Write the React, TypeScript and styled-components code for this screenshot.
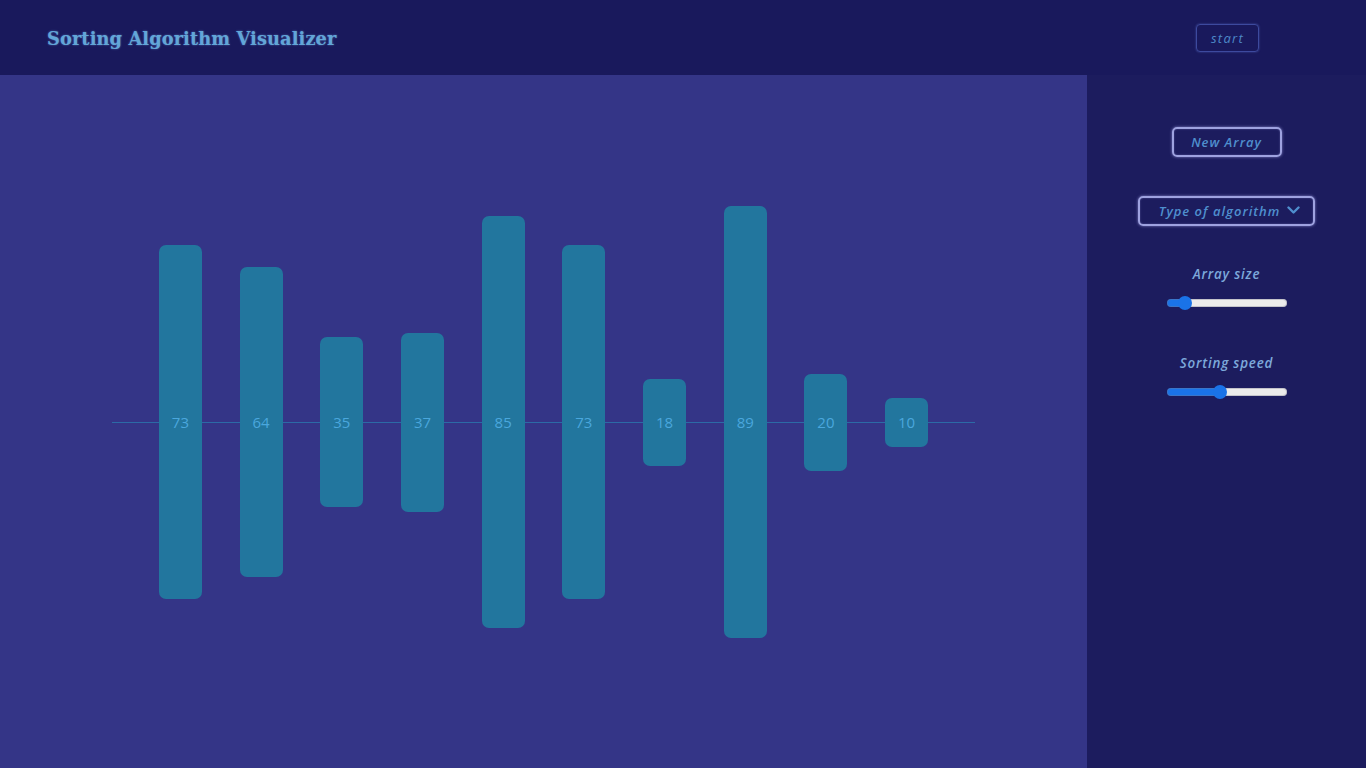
import React, { useState } from "react";
import styled, { createGlobalStyle } from "styled-components";

const Global = createGlobalStyle`
  html, body { margin: 0; padding: 0; }
  body { background: #343587; font-family: "Open Sans", sans-serif; overflow: hidden; }
  * { box-sizing: border-box; }
`;

const Page = styled.div`
  width: 1366px;
  height: 768px;
  display: flex;
  flex-direction: column;
`;

const Header = styled.header`
  height: 75px;
  flex: none;
  background: #19195c;
  display: flex;
  align-items: center;
  justify-content: space-between;
  padding: 0 107px 0 47px;
`;

const Title = styled.h1`
  margin: 0;
  padding-top: 2px;
  font-family: "DejaVu Serif", "Liberation Serif", serif;
  font-weight: bold;
  font-size: 17.8px;
  letter-spacing: 0.1px;
  color: #62a6d8;
  text-shadow: 0 0 2px rgba(120, 170, 230, 0.6);
`;

const StartButton = styled.button`
  width: 63px;
  height: 28px;
  margin-top: 1px;
  background: transparent;
  border: 1px solid #3d4a9e;
  border-radius: 4px;
  box-shadow: 0 0 2px rgba(90, 110, 200, 0.7);
  font-family: "Open Sans", sans-serif;
  font-style: italic;
  font-size: 13px;
  letter-spacing: 1.3px;
  color: #4d88c8;
  padding: 0;
`;

const Body = styled.div`
  flex: 1;
  display: flex;
`;

const Stage = styled.main`
  width: 1087px;
  background: #343587;
  display: flex;
  align-items: center;
  justify-content: center;
  padding-top: 1px;
`;

const BarRow = styled.div`
  display: flex;
  align-items: center;
  gap: 37.7px;
  padding: 0 47px;
  background: linear-gradient(#2c6aa6, #2c6aa6) center / 100% 1px no-repeat;
`;

const Bar = styled.div<{ $h: number }>`
  width: 43px;
  height: ${(p) => p.$h}px;
  background: #22769e;
  border-radius: 7px;
  display: flex;
  align-items: center;
  justify-content: center;
  font-family: "Open Sans", sans-serif;
  font-size: 15px;
  color: #4aa7dd;
`;

const Sidebar = styled.aside`
  flex: 1;
  background: #1c1c5e;
  display: flex;
  flex-direction: column;
  align-items: center;
  padding-top: 52px;
`;

const OutlineButton = styled.button<{ $w: number }>`
  width: ${(p) => p.$w}px;
  height: 30px;
  background: transparent;
  border: 2px solid #9ea2e0;
  border-radius: 5px;
  box-shadow: 0 0 3px rgba(170, 170, 240, 0.7), inset 0 0 2px rgba(170, 170, 240, 0.4);
  font-family: "Open Sans", sans-serif;
  font-style: italic;
  font-weight: 600;
  font-size: 13px;
  letter-spacing: 1px;
  color: #4f8fce;
  display: flex;
  align-items: center;
  justify-content: center;
  gap: 7px;
  padding: 0 0 1px;
`;

const SelectButton = styled(OutlineButton)`
  margin-top: 39px;
  padding-left: 6px;
`;

const Control = styled.div<{ $mt: number }>`
  margin-top: ${(p) => p.$mt}px;
  display: flex;
  flex-direction: column;
  align-items: center;
  gap: 13px;
`;

const Label = styled.label`
  font-family: "Open Sans", sans-serif;
  font-style: italic;
  font-weight: 600;
  font-size: 13.4px;
  line-height: 18px;
  letter-spacing: 0.8px;
  color: #7da9db;
`;

const Range = styled.input`
  -webkit-appearance: none;
  appearance: none;
  width: 120px;
  height: 14px;
  margin: 0;
  background: transparent;
  &::-webkit-slider-runnable-track {
    height: 8px;
    border-radius: 4px;
    background: var(--track);
    box-shadow: inset 0 0 0 1px rgba(120, 120, 140, 0.35);
  }
  &::-webkit-slider-thumb {
    -webkit-appearance: none;
    width: 14px;
    height: 14px;
    border-radius: 50%;
    background: #1a73e8;
    margin-top: -3px;
    border: none;
  }
`;

const Chevron = () => (
  <svg width="13" height="9" viewBox="0 0 13 9" fill="none">
    <path d="M1.5 1.5 L6.5 6.5 L11.5 1.5" stroke="#4f8fce" strokeWidth="2.4" strokeLinecap="round" strokeLinejoin="round" />
  </svg>
);

const Slider = ({ value }: { value: number }) => {
  const [v, setV] = useState(value);
  const pct = 5 + v * 0.9;
  return (
    <Range
      type="range"
      min={0}
      max={100}
      value={v}
      onChange={(e) => setV(Number(e.target.value))}
      style={{ ["--track" as any]: `linear-gradient(to right, #1a73e8 ${pct}%, #ebebeb ${pct}%)` }}
    />
  );
};

const values = [73, 64, 35, 37, 85, 73, 18, 89, 20, 10];

export default function App() {
  return (
    <Page>
      <Global />
      <Header>
        <Title>Sorting Algorithm Visualizer</Title>
        <StartButton>start</StartButton>
      </Header>
      <Body>
        <Stage>
          <BarRow>
            {values.map((v, i) => (
              <Bar key={i} $h={Math.round(v * 4.85)}>
                {v}
              </Bar>
            ))}
          </BarRow>
        </Stage>
        <Sidebar>
          <OutlineButton $w={110}>New Array</OutlineButton>
          <SelectButton $w={177}>
            Type of algorithm <Chevron />
          </SelectButton>
          <Control $mt={39}>
            <Label>Array size</Label>
            <Slider value={11} />
          </Control>
          <Control $mt={44}>
            <Label>Sorting speed</Label>
            <Slider value={44} />
          </Control>
        </Sidebar>
      </Body>
    </Page>
  );
}
